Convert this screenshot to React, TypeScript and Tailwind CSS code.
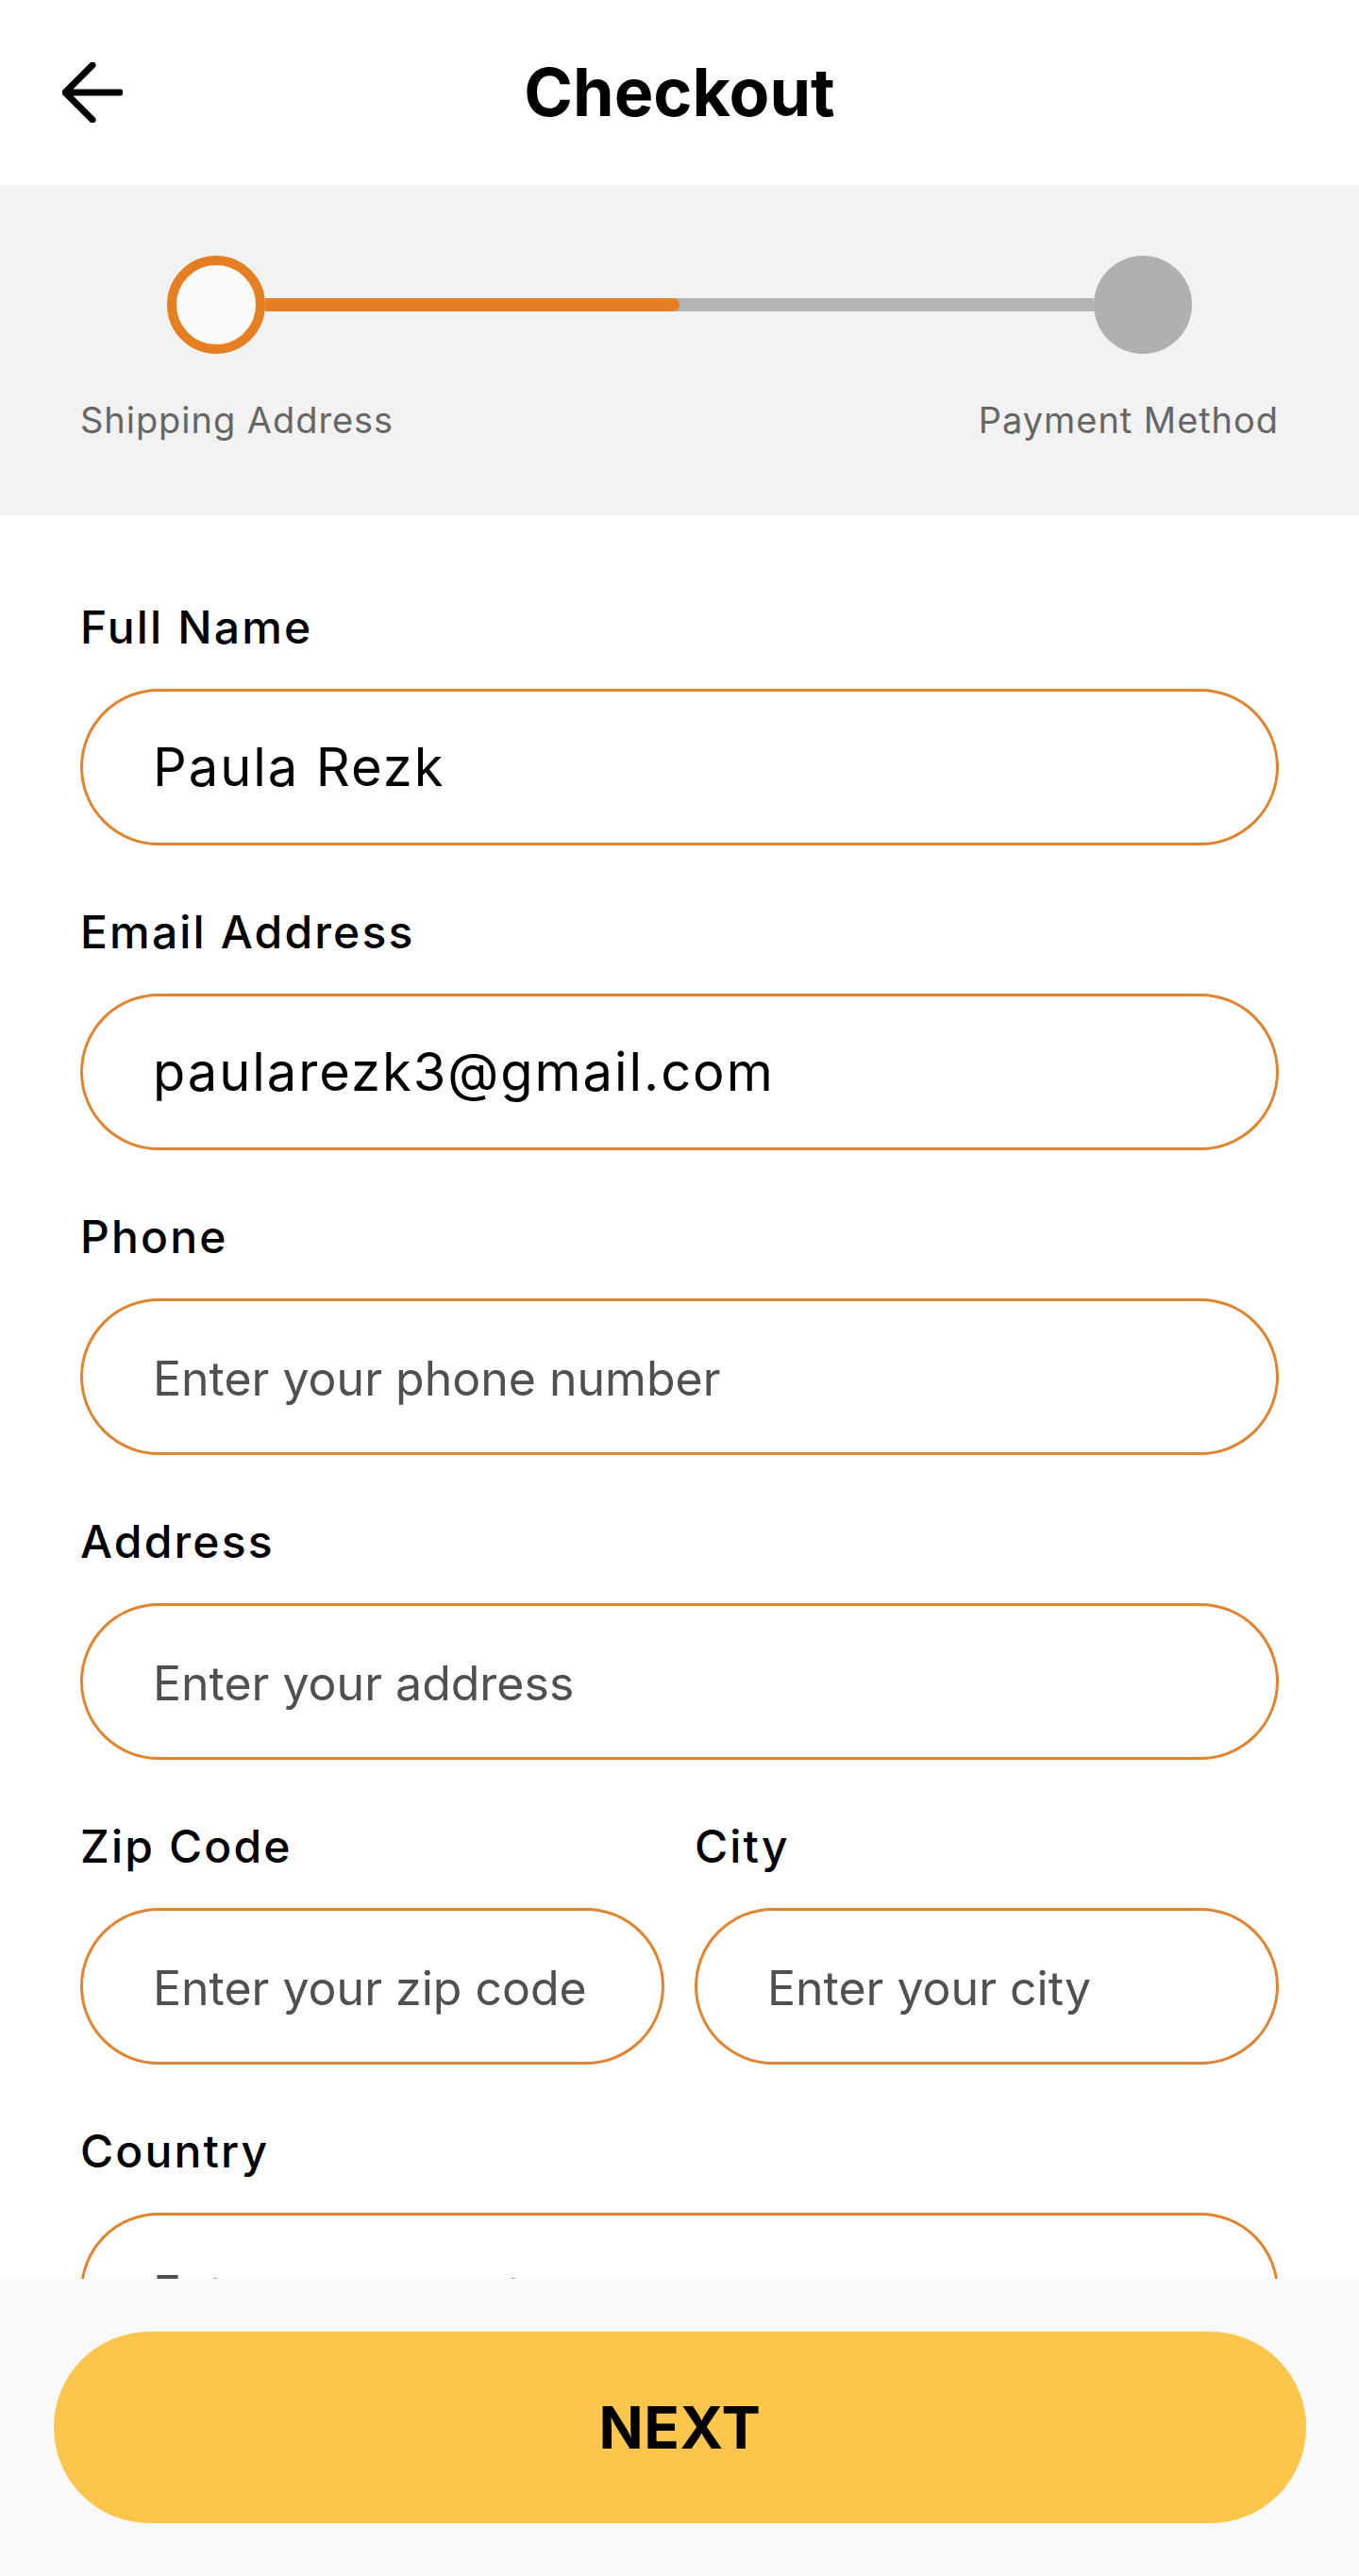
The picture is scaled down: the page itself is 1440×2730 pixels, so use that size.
import React from "react";

const fields = [
    { label: "Full Name", value: "Paula Rezk", placeholder: "Enter your full name" },
    { label: "Email Address", value: "paularezk3@gmail.com", placeholder: "Enter your email" },
    { label: "Phone", value: "", placeholder: "Enter your phone number" },
    { label: "Address", value: "", placeholder: "Enter your address" },
];

function Field({ label, value, placeholder }: { label: string; value?: string; placeholder: string }) {
    return (
        <div className="flex flex-col min-w-0 flex-1">
            <label className="text-[48px] leading-[58px] font-medium text-black mb-[36px] tracking-[0.045em]">{label}</label>
            <input
                defaultValue={value}
                placeholder={placeholder}
                className="h-[166px] w-full box-border border-[3px] border-[#e0842f] rounded-full pl-[74px] pr-[40px] bg-white outline-none text-[56px] tracking-[0.035em] text-black placeholder:text-[50px] placeholder:tracking-normal placeholder:text-[#505050]"
            />
        </div>
    );
}

export default function App() {
    return (
        <div className="w-[1440px] h-[2730px] flex flex-col bg-white font-['Inter',sans-serif]">
            {/* Header */}
            <header className="h-[196px] shrink-0 grid grid-cols-[1fr_auto_1fr] items-center">
                <div className="pl-[66px] flex items-center">
                    <svg width="64" height="64" viewBox="0 0 64 64" fill="none" stroke="black" strokeWidth="7" strokeLinecap="round" strokeLinejoin="round">
                        <path d="M61 32H5M32 3L3 32L32 61" />
                    </svg>
                </div>
                <h1 className="text-[70px] leading-[88px] font-bold text-black">Checkout</h1>
                <div />
            </header>

            {/* Stepper */}
            <section className="h-[350px] shrink-0 bg-[#f2f2f2] pt-[75px]">
                <div className="px-[177px] flex items-center">
                    <div className="w-[104px] h-[104px] rounded-full border-[10px] border-[#e67f22] bg-[#fafafa] shrink-0" />
                    <div className="flex-1 h-[14px] flex bg-[#b3b3b3]">
                        <div className="flex-1 bg-[#e67f22] rounded-r-full" />
                        <div className="flex-1" />
                    </div>
                    <div className="w-[104px] h-[104px] rounded-full bg-[#b0b0b0] shrink-0" />
                </div>
                <div className="mt-[47px] px-[85px] flex justify-between text-[38px] leading-[46px] text-[#666666] tracking-[0.025em]">
                    <span>Shipping Address</span>
                    <span>Payment Method</span>
                </div>
            </section>

            {/* Form */}
            <main className="flex-1 overflow-hidden px-[85px] pt-[90px] flex flex-col gap-[63px]">
                {fields.map((f) => (
                    <Field key={f.label} {...f} />
                ))}
                <div className="flex gap-[32px]">
                    <Field label="Zip Code" placeholder="Enter your zip code" />
                    <Field label="City" placeholder="Enter your city" />
                </div>
                <Field label="Country" placeholder="Enter your country" />
            </main>

            {/* Bottom */}
            <footer className="h-[315px] shrink-0 bg-[#f9f9f9] pl-[57px] pr-[56px] flex items-center">
                <button className="w-full h-[203px] rounded-full bg-[#fcc54c] text-[62px] font-bold text-black tracking-[0.01em]">
                    NEXT
                </button>
            </footer>
        </div>
    );
}
